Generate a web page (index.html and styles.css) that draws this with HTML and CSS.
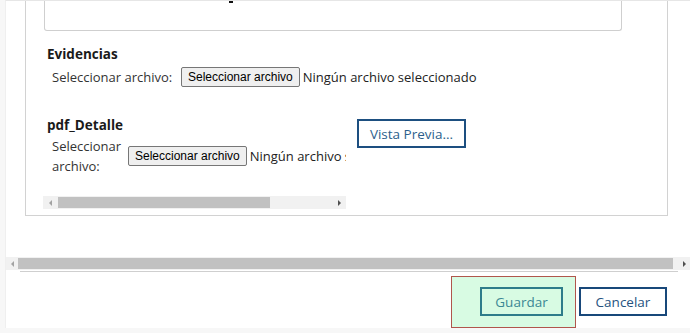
FILE: index.html
```html
<!DOCTYPE html>
<html lang="es">
<head>
<meta charset="utf-8">
<title>Formulario</title>
<link rel="stylesheet" href="styles.css">
</head>
<body>
<div class="frame">
  <div class="viewport">
    <div class="panel">
      <div class="ta"><span class="caret"></span></div>

      <div class="section1">
        <div class="title">Evidencias</div>
        <div class="file-row">
          <span class="label">Seleccionar archivo:</span>
          <button class="fbtn" type="button">Seleccionar archivo</button>
          <span class="fname">Ningún archivo seleccionado</span>
        </div>
      </div>

      <div class="section2">
        <div class="scrollbox">
          <div class="clip">
            <div class="title">pdf_Detalle</div>
            <div class="file-row row2">
              <span class="label label2">Seleccionar archivo:</span>
              <button class="fbtn" type="button">Seleccionar archivo</button>
              <span class="fname">Ningún archivo seleccionado</span>
            </div>
          </div>
          <div class="hbar inner">
            <span class="arr left"></span>
            <span class="thumb"></span>
            <span class="track"></span>
            <span class="arr right"></span>
          </div>
        </div>
        <button class="btn-outline preview" type="button">Vista Previa...</button>
      </div>
    </div>
  </div>

  <div class="hbar outer">
    <span class="arr left"></span>
    <span class="thumb"></span>
    <span class="track"></span>
    <span class="arr right"></span>
  </div>

  <div class="footer">
    <div class="save-wrap">
      <button class="btn-outline save" type="button">Guardar</button>
    </div>
    <button class="btn-outline cancel" type="button">Cancelar</button>
  </div>
</div>
</body>
</html>
```

FILE: styles.css
```css
* { box-sizing: border-box; }

body {
  margin: 0;
  background: #f7f7f7;
  font-family: "Open Sans", "DejaVu Sans", sans-serif;
  font-size: 13px;
  color: #222;
}

.frame {
  margin-left: 5px;
  height: 328px;
  background: #fff;
  border-left: 1px solid #efefef;
  border-top: 1px solid #e6e6e6;
  display: flex;
  flex-direction: column;
}

.viewport {
  height: 256px;
  padding-left: 19px;
  overflow: hidden;
  flex: none;
}

.panel {
  width: 643px;
  border: 1px solid #d2d2d2;
  border-top: none;
  padding-bottom: 6px;
}

.ta {
  margin-left: 18px;
  width: 578px;
  height: 30px;
  border: 1px solid #cfcfcf;
  border-top: none;
  border-radius: 0 0 3px 3px;
  padding-left: 184px;
}

.caret {
  display: block;
  width: 4px;
  height: 2px;
  background: #111;
}

.section1 {
  margin: 13px 0 0 17px;
}

.title {
  font-weight: 700;
  font-size: 13.5px;
  line-height: 20px;
  padding-left: 4px;
  color: #1a1a1a;
}

.file-row {
  display: flex;
  align-items: center;
  padding-left: 9px;
  margin-top: 3px;
  line-height: 20px;
  white-space: nowrap;
}

.label {
  width: 129px;
  flex: none;
  color: #333;
}

.fbtn {
  font: 12px "Liberation Sans", Arial, sans-serif;
  height: 20px;
  padding: 0 6px;
  background: #efefef;
  border: 1px solid #767676;
  border-radius: 2px;
  color: #000;
  margin-right: 3px;
  flex: none;
}

.fname {
  white-space: nowrap;
  color: #222;
}

.section2 {
  display: flex;
  align-items: flex-start;
  margin: 28px 0 0 17px;
}

.scrollbox {
  width: 303px;
  flex: none;
}

.clip {
  overflow: hidden;
}

.row2 {
  margin-top: 1px;
}

.label2 {
  width: 76px;
  white-space: normal;
}

.hbar {
  display: flex;
  height: 13px;
  background: #f1f1f1;
}

.hbar.inner {
  margin-top: 20px;
}

.arr {
  width: 14px;
  flex: none;
  display: flex;
  align-items: center;
  justify-content: center;
}

.arr::before {
  content: "";
  display: block;
  border-top: 3px solid transparent;
  border-bottom: 3px solid transparent;
}

.arr.left::before {
  border-right: 3px solid #a3a3a3;
}

.arr.right::before {
  border-left: 3px solid #505050;
}

.thumb {
  flex: none;
  margin: 1px 0 1px 1px;
  background: #c1c1c1;
}

.track {
  flex: 1;
}

.inner .thumb { width: 212px; }

.outer {
  width: 684px;
  flex: none;
}

.outer .arr { width: 12px; }
.outer .thumb { width: 655px; margin-left: 0; }

.btn-outline {
  flex: none;
  height: 29px;
  background: #fff;
  font: 13.5px "Open Sans", "DejaVu Sans", sans-serif;
  padding: 0;
}

.preview {
  margin: 4px 0 0 11px;
  width: 109px;
  border: 2px solid #1d4f80;
  color: #2d5f8c;
}

.footer {
  margin-left: 14px;
  width: 658px;
  border-top: 1px solid #cfcfcf;
  margin-top: 1px;
  padding-top: 4px;
  display: flex;
  justify-content: flex-end;
  align-items: flex-start;
  padding-right: 11px;
  flex: 1;
}

.save-wrap {
  width: 125px;
  height: 52px;
  background: #d8fbe3;
  border: 1px solid #b0564c;
  padding: 10px 12px 0 28px;
  margin-right: 3px;
}

.save {
  width: 83px;
  border: 2px solid #2e7c8a;
  background: #d8fbe3;
  color: #3b8794;
}

.cancel {
  margin-top: 11px;
  width: 88px;
  border: 2px solid #18487a;
  color: #26537f;
}
```
